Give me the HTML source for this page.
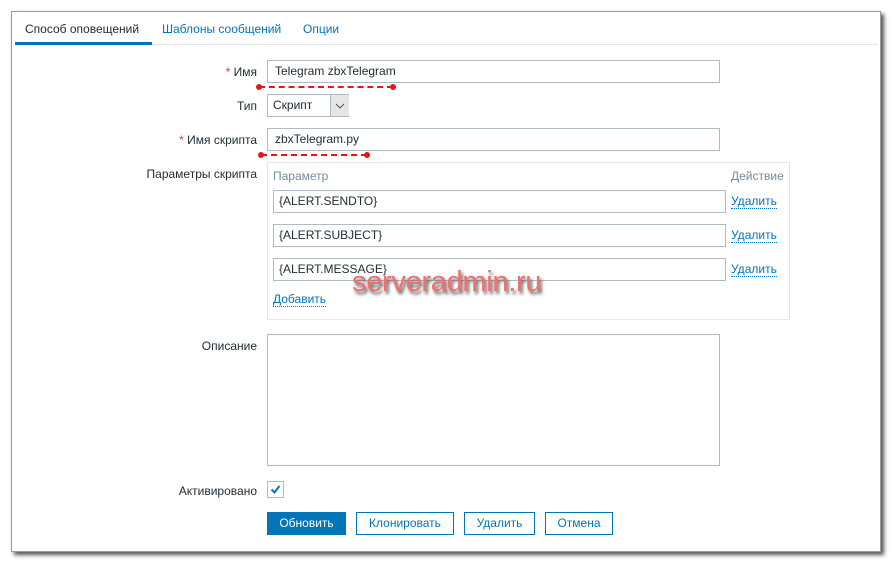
<!DOCTYPE html>
<html><head><meta charset="utf-8"><style>
body{margin:0;width:892px;height:564px;background:#fff;font-family:"Liberation Sans",Arial,sans-serif;font-size:12px;color:#1f2c33;position:relative;overflow:hidden}
.a{position:absolute}
.frame{left:11px;top:11px;width:868px;height:539px;border:1px solid #9a9a9a;box-shadow:3px 3px 4px #555;background:#fff}
.inp{position:absolute;border:1px solid #acbbc4;background:#fff;box-sizing:border-box;padding-left:7px;line-height:21px;height:23px}
.lbl{position:absolute;right:635px;text-align:right;white-space:nowrap}
.req{color:#e33734}
.link{color:#0275b8;border-bottom:1px dotted #0275b8;line-height:13px}
.btn{position:absolute;top:512px;height:23px;box-sizing:border-box;border:1px solid #0275b8;color:#0275b8;line-height:21px;text-align:center;background:#fff}
.dash{position:absolute;border-top:2px dashed #e8141a;height:0}
.dot{position:absolute;width:6px;height:6px;border-radius:50%;background:#e8141a}
</style></head><body>
<div class="a frame"></div>
<div class="a" style="left:15px;top:44px;width:863px;border-top:1px solid #e6e6e6"></div>
<div class="a" style="left:15px;top:42px;width:137px;height:3px;background:#0275b8"></div>
<div class="a" style="left:25px;top:22px">Способ оповещений</div>
<div class="a" style="left:162px;top:22px;color:#0275b8">Шаблоны сообщений</div>
<div class="a" style="left:303px;top:22px;color:#0275b8">Опции</div>

<div class="lbl" style="top:65px"><span class="req">*</span> Имя</div>
<div class="inp" style="left:267px;top:60px;width:453px">Telegram zbxTelegram</div>
<div class="dash" style="left:259px;top:86px;width:134px"></div>
<div class="dot" style="left:256px;top:84px"></div><div class="dot" style="left:390px;top:84px"></div>

<div class="lbl" style="top:99px">Тип</div>
<div class="inp" style="left:267px;top:94px;width:82px;padding-left:5px">Скрипт</div>
<div class="a" style="left:330px;top:95px;width:18px;height:21px;background:#e6e6e6;border-left:1px solid #acbbc4"><svg width="18" height="21"><path d="M5 9 L9 13 L13 9" fill="none" stroke="#555" stroke-width="1"/></svg></div>

<div class="lbl" style="top:133px"><span class="req">*</span> Имя скрипта</div>
<div class="inp" style="left:267px;top:128px;width:453px">zbxTelegram.py</div>
<div class="dash" style="left:261px;top:154px;width:106px"></div>
<div class="dot" style="left:258px;top:152px"></div><div class="dot" style="left:364px;top:152px"></div>

<div class="lbl" style="top:167px">Параметры скрипта</div>
<div class="a" style="left:267px;top:162px;width:521px;height:156px;border:1px solid #e6e6e6"></div>
<div class="a" style="left:273px;top:169px;color:#768d99">Параметр</div>
<div class="a" style="left:731px;top:169px;color:#768d99">Действие</div>
<div class="inp" style="left:273px;top:190px;width:453px;padding-left:5px">{ALERT.SENDTO}</div>
<div class="inp" style="left:273px;top:224px;width:453px;padding-left:5px">{ALERT.SUBJECT}</div>
<div class="inp" style="left:273px;top:258px;width:453px;padding-left:5px">{ALERT.MESSAGE}</div>
<div class="a link" style="left:731px;top:195px">Удалить</div>
<div class="a link" style="left:731px;top:229px">Удалить</div>
<div class="a link" style="left:731px;top:263px">Удалить</div>
<div class="a link" style="left:273px;top:293px">Добавить</div>
<div class="a" style="left:352px;top:266px;font-size:29px;color:#f07070;text-shadow:2px 3px 3px #555;letter-spacing:-0.3px">serveradmin.ru</div>

<div class="lbl" style="top:339px">Описание</div>
<div class="inp" style="left:267px;top:334px;width:453px;height:132px"></div>

<div class="lbl" style="top:484px">Активировано</div>
<div class="a" style="left:267px;top:481px;width:15px;height:15px;border:1px solid #acbbc4"><svg width="15" height="15"><path d="M3.5 7.5 L6.5 10.5 L11.5 4" fill="none" stroke="#0275b8" stroke-width="2"/></svg></div>

<div class="btn" style="left:267px;width:79px;background:#0275b8;color:#fff">Обновить</div>
<div class="btn" style="left:356px;width:98px">Клонировать</div>
<div class="btn" style="left:464px;width:71px">Удалить</div>
<div class="btn" style="left:545px;width:68px">Отмена</div>
</body></html>
